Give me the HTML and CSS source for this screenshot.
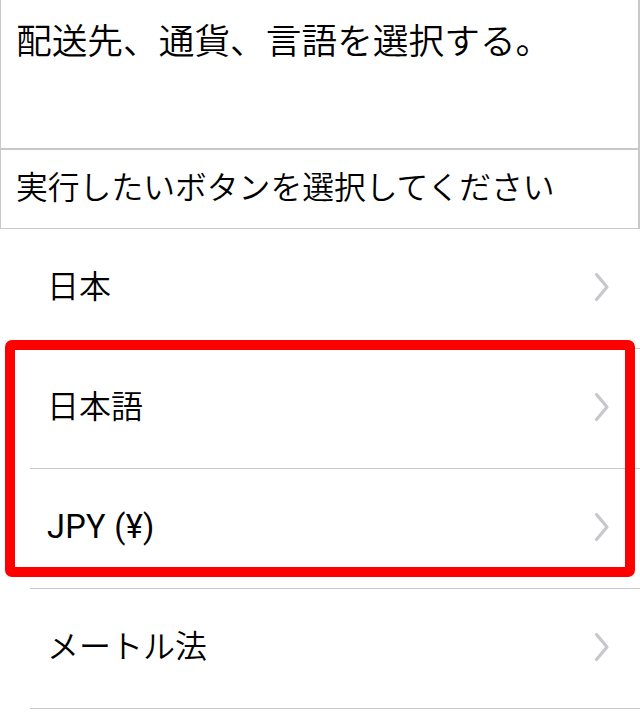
FILE: index.html
```html
<!DOCTYPE html>
<html lang="ja">
<head>
<meta charset="utf-8">
<title>設定</title>
<link rel="stylesheet" href="styles.css">
</head>
<body>
<div class="page">
  <div class="header">
    <div class="title">配送先、通貨、言語を選択する。</div>
  </div>
  <div class="sub">
    <div class="subtext">実行したいボタンを選択してください</div>
  </div>
  <ul class="list">
    <li class="row"><span class="label">日本</span><svg class="chev" viewBox="0 0 16 30" width="16" height="30"><path d="M2.5 2.5 L13 15 L2.5 27.5" fill="none" stroke="#c7c7cc" stroke-width="3.2" stroke-linecap="round" stroke-linejoin="round"/></svg></li>
    <li class="row"><span class="label">日本語</span><svg class="chev" viewBox="0 0 16 30" width="16" height="30"><path d="M2.5 2.5 L13 15 L2.5 27.5" fill="none" stroke="#c7c7cc" stroke-width="3.2" stroke-linecap="round" stroke-linejoin="round"/></svg></li>
    <li class="row"><span class="label latin">JPY (¥)</span><svg class="chev" viewBox="0 0 16 30" width="16" height="30"><path d="M2.5 2.5 L13 15 L2.5 27.5" fill="none" stroke="#c7c7cc" stroke-width="3.2" stroke-linecap="round" stroke-linejoin="round"/></svg></li>
    <li class="row"><span class="label">メートル法</span><svg class="chev" viewBox="0 0 16 30" width="16" height="30"><path d="M2.5 2.5 L13 15 L2.5 27.5" fill="none" stroke="#c7c7cc" stroke-width="3.2" stroke-linecap="round" stroke-linejoin="round"/></svg></li>
  </ul>
  <div class="highlight"></div>
</div>
</body>
</html>
```
FILE: styles.css
```css
html, body {
  margin: 0;
  padding: 0;
  background: #ffffff;
}
body {
  font-family: "Roboto", "Noto Sans CJK JP", sans-serif;
  font-weight: 350;
  color: #000000;
}
.page {
  position: relative;
  width: 640px;
  height: 716px;
  overflow: hidden;
}
.header {
  box-sizing: border-box;
  height: 150px;
  border-left: 1px solid #c8c8c8;
  border-right: 2px solid #c8c8c8;
  border-bottom: 2px solid #c8c8c8;
  padding: 22px 0 0 15px;
}
.title {
  font-size: 35.7px;
  line-height: 40px;
}
.sub {
  box-sizing: border-box;
  height: 79px;
  border-left: 1px solid #c8c8c8;
  border-right: 2px solid #c8c8c8;
  border-bottom: 1px solid #c8c8c8;
  display: flex;
  align-items: center;
  padding: 0 0 3px 15px;
}
.subtext {
  font-size: 31.8px;
  line-height: 40px;
}
.list {
  list-style: none;
  margin: 0;
  padding: 0 0 0 30px;
}
.row {
  box-sizing: border-box;
  height: 120px;
  border-bottom: 1px solid #c8c7cc;
  display: flex;
  align-items: center;
  justify-content: space-between;
  padding: 0 30px 3px 17px;
}
.label {
  font-size: 32px;
  line-height: 40px;
}
.latin {
  font-weight: 400;
  font-size: 32.5px;
  letter-spacing: 0.3px;
}
.chev {
  display: block;
}
.highlight {
  position: absolute;
  left: 5px;
  top: 340px;
  width: 630px;
  height: 237px;
  box-sizing: border-box;
  border: 10px solid #ff0000;
  border-radius: 7px;
}
```
